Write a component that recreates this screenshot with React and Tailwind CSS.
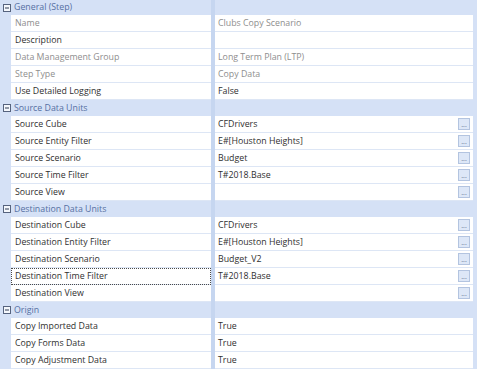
const sections = [
  {
    title: 'General (Step)',
    first: true,
    rows: [
      { label: 'Name', value: 'Clubs Copy Scenario', muted: true },
      { label: 'Description', value: '' },
      { label: 'Data Management Group', value: 'Long Term Plan (LTP)', muted: true },
      { label: 'Step Type', value: 'Copy Data', muted: true },
      { label: 'Use Detailed Logging', value: 'False' },
    ],
  },
  {
    title: 'Source Data Units',
    rows: [
      { label: 'Source Cube', value: 'CFDrivers', button: true },
      { label: 'Source Entity Filter', value: 'E#[Houston Heights]', button: true },
      { label: 'Source Scenario', value: 'Budget', button: true },
      { label: 'Source Time Filter', value: 'T#2018.Base', button: true },
      { label: 'Source View', value: '', button: true },
    ],
  },
  {
    title: 'Destination Data Units',
    rows: [
      { label: 'Destination Cube', value: 'CFDrivers', button: true },
      { label: 'Destination Entity Filter', value: 'E#[Houston Heights]', button: true },
      { label: 'Destination Scenario', value: 'Budget_V2', button: true },
      { label: 'Destination Time Filter', value: 'T#2018.Base', button: true, focused: true },
      { label: 'Destination View', value: '', button: true },
    ],
  },
  {
    title: 'Origin',
    rows: [
      { label: 'Copy Imported Data', value: 'True' },
      { label: 'Copy Forms Data', value: 'True' },
      { label: 'Copy Adjustment Data', value: 'True' },
    ],
  },
];

function MinusBox() {
  return (
    <svg width="8" height="8" viewBox="0 0 8 8" className="block">
      <rect x="0.5" y="0.5" width="7" height="7" fill="#f4f7fc" stroke="#56637e" />
      <line x1="2" y1="4" x2="6" y2="4" stroke="#2f3a52" />
    </svg>
  );
}

function SectionHeader({ title, first }) {
  return (
    <div className={`flex ${first ? 'h-[15px]' : 'h-[16px]'} bg-[#d5e1f6]`}>
      <div className="w-[211px] flex items-center gap-[3px] pl-[3px]">
        <MinusBox />
        <span className="text-[#5670a3]">{title}</span>
      </div>
      <div className="w-[4px] bg-[#c6d6f0]" />
      <div className="flex-1" />
    </div>
  );
}

function PropRow({ label, value, muted, button, focused }) {
  const tone = muted ? 'text-[#8e8e8e]' : 'text-[#303030]';
  return (
    <div className="flex h-[17px] bg-[#d5e1f6]">
      <div className="w-[11px]" />
      <div
        className={`w-[200px] bg-white border-b border-[#dde6f5] pl-[4px] flex items-center ${tone} ${
          focused ? 'outline outline-1 outline-dotted outline-[#4a4a4a] -outline-offset-1' : ''
        }`}
      >
        {label}
      </div>
      <div className="w-[4px] bg-[#c6d6f0]" />
      <div className={`flex-1 bg-white border-b border-[#dde6f5] pl-[3px] pr-[3px] flex items-center justify-between ${tone}`}>
        <span>{value}</span>
        {button && (
          <span className="w-[12px] h-[12px] border border-[#b3c4e0] bg-[#dde7f7] flex items-center justify-center text-[7px] leading-none text-[#5b6b8c]">
            ...
          </span>
        )}
      </div>
      <div className="w-[4px]" />
    </div>
  );
}

export default function App() {
  return (
    <div className="w-[477px] h-[373px] bg-white overflow-hidden text-[8.8px] leading-none" style={{ fontFamily: '"Open Sans", "Noto Sans", sans-serif' }}>
      {sections.map((s) => (
        <div key={s.title}>
          <SectionHeader title={s.title} first={s.first} />
          {s.rows.map((r) => (
            <PropRow key={r.label} {...r} />
          ))}
        </div>
      ))}
    </div>
  );
}
